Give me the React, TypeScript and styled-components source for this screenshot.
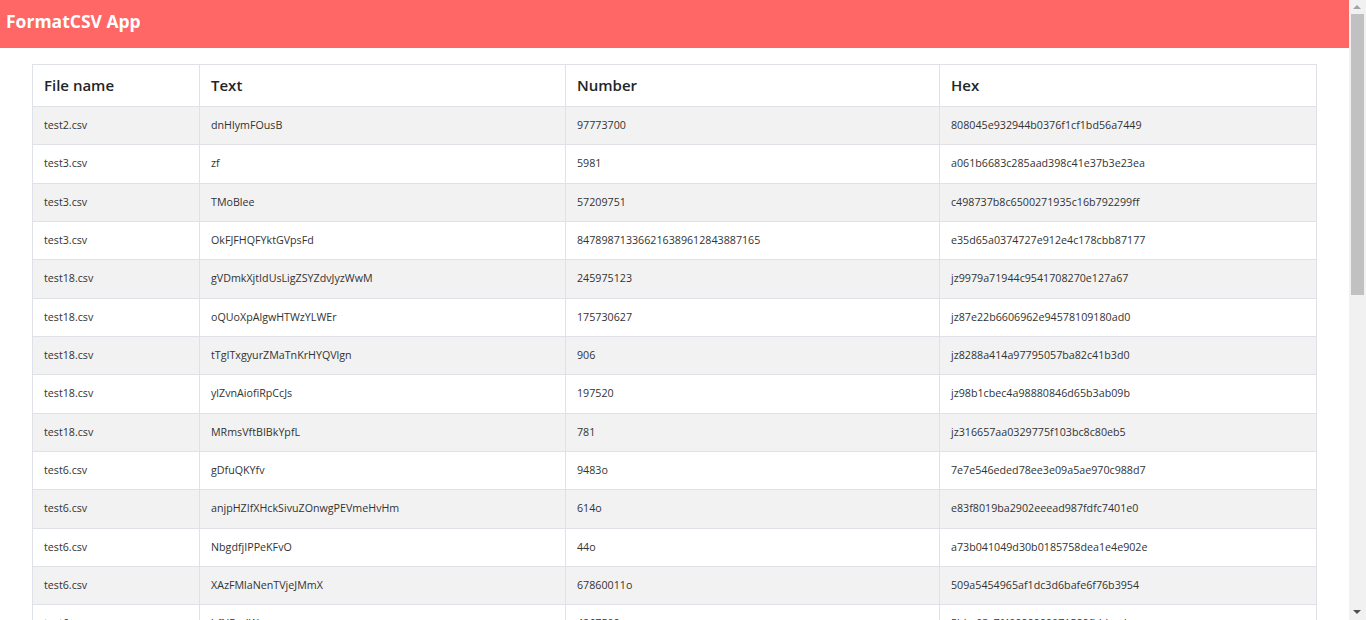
import React from 'react';
import styled, { createGlobalStyle } from 'styled-components';

const GlobalStyle = createGlobalStyle`
  html, body {
    margin: 0;
    padding: 0;
    background: #ffffff;
    font-family: "Open Sans", "Noto Sans", sans-serif;
    color: #212529;
  }
`;

const Page = styled.div`
  padding-right: 17px;
`;

const Header = styled.header`
  display: flex;
  align-items: center;
  height: 48px;
  padding: 0 6px 6px;
  box-sizing: border-box;
  background-color: #ff6666;
`;

const Title = styled.h1`
  margin: 0;
  font-size: 17.5px;
  font-weight: 700;
  color: #ffffff;
`;

const Main = styled.main`
  padding: 16px 33px 32px 32px;
`;

const Table = styled.table`
  width: 100%;
  border-collapse: collapse;
  table-layout: fixed;
  border: 1px solid #dee2e6;
`;

const Col = styled.col<{ $width: number }>`
  width: ${(p) => p.$width}px;
`;

const HeadCell = styled.th`
  padding: 9px 11px;
  text-align: left;
  font-size: 15px;
  font-weight: 600;
  line-height: 23px;
  color: #212529;
  border: 1px solid #dee2e6;
`;

const Row = styled.tr<{ $striped: boolean }>`
  background-color: ${(p) => (p.$striped ? '#f2f2f2' : '#ffffff')};
`;

const Cell = styled.td`
  padding: 12px 11px;
  font-size: 10.7px;
  line-height: 13.35px;
  color: #333;
  border: 1px solid #dee2e6;
  white-space: nowrap;
  overflow: hidden;
`;

/* stand-in for the browser scrollbar seen at the right edge */
const ScrollTrack = styled.div`
  position: fixed;
  top: 0;
  right: 0;
  width: 17px;
  height: 100vh;
  background: #f1f1f1;
`;

const ScrollThumb = styled.div`
  position: absolute;
  top: 14px;
  left: 2px;
  width: 13px;
  height: 281px;
  background: #c1c1c1;
`;

const ScrollArrow = styled.div<{ $down?: boolean }>`
  position: absolute;
  left: 4px;
  ${(p) => (p.$down ? 'bottom: 6px;' : 'top: 5px;')}
  width: 0;
  height: 0;
  border-left: 4px solid transparent;
  border-right: 4px solid transparent;
  ${(p) =>
    p.$down ? 'border-top: 4px solid #505050;' : 'border-bottom: 4px solid #a3a3a3;'}
`;

type Record = [string, string, string, string];

const rows: Record[] = [
  ['test2.csv', 'dnHlymFOusB', '97773700', '808045e932944b0376f1cf1bd56a7449'],
  ['test3.csv', 'zf', '5981', 'a061b6683c285aad398c41e37b3e23ea'],
  ['test3.csv', 'TMoBlee', '57209751', 'c498737b8c6500271935c16b792299ff'],
  ['test3.csv', 'OkFJFHQFYktGVpsFd', '847898713366216389612843887165', 'e35d65a0374727e912e4c178cbb87177'],
  ['test18.csv', 'gVDmkXjtIdUsLigZSYZdvJyzWwM', '245975123', 'jz9979a71944c9541708270e127a67'],
  ['test18.csv', 'oQUoXpAlgwHTWzYLWEr', '175730627', 'jz87e22b6606962e94578109180ad0'],
  ['test18.csv', 'tTgITxgyurZMaTnKrHYQVlgn', '906', 'jz8288a414a97795057ba82c41b3d0'],
  ['test18.csv', 'ylZvnAiofiRpCcJs', '197520', 'jz98b1cbec4a98880846d65b3ab09b'],
  ['test18.csv', 'MRmsVftBIBkYpfL', '781', 'jz316657aa0329775f103bc8c80eb5'],
  ['test6.csv', 'gDfuQKYfv', '9483o', '7e7e546eded78ee3e09a5ae970c988d7'],
  ['test6.csv', 'anjpHZIfXHckSivuZOnwgPEVmeHvHm', '614o', 'e83f8019ba2902eeead987fdfc7401e0'],
  ['test6.csv', 'NbgdfjIPPeKFvO', '44o', 'a73b041049d30b0185758dea1e4e902e'],
  ['test6.csv', 'XAzFMlaNenTVjeJMmX', '67860011o', '509a5454965af1dc3d6bafe6f76b3954'],
  ['test6.csv', 'hfNEcxIWgo', '4267509', '5bbe03c7f40999999071589fbbbaeb'],
  ['test7.csv', 'QwLrbSaeNn', '3301', '2bf3a1e92c50d77a8e1c44b9f0ad61e3'],
  ['test7.csv', 'jKxUYpMmTqaZ', '8890412', '91d0ce55a7b8c23f6e0147d9ab82f3c1'],
  ['test7.csv', 'PRvoNbHaL', '72', 'c3e7a1b09d4f5628e07a93bd14c6f25e'],
  ['test7.csv', 'sWtEkGdhZyOqfBuV', '190334', '4f8b2e6a1d9c03757e8a16b4d2c90fa3'],
  ['test8.csv', 'yHnCeXoRdP', '551020', 'jz6a4d9e2f017b853c6e9a02b4d7e1'],
  ['test8.csv', 'LmZoKsVwqT', '40091', 'jz0c8b7a6f5e4d3c2b1a09f8e7d6c5'],
  ['test8.csv', 'uBiQfTnxEaJ', '3o', 'jz5e1f2a3b4c5d6e7f8091a2b3c4d5'],
  ['test9.csv', 'GxVrWpYkLoMd', '66720981', 'b7a0e35c2d4f918e6a7c0b3d5f1e2a94'],
  ['test9.csv', 'oCsEiRtAnBh', '418', '0e9d8c7b6a5f4e3d2c1b0a9f8e7d6c5b'],
  ['test9.csv', 'ZqPuKyWmNvLj', '9001237', 'f1e2d3c4b5a6978877665544332211aa'],
  ['test10.csv', 'DkTmQrXaHe', '12o', '3c5e7a9b1d2f4e6a8c0b2d4f6e8a0c1e'],
  ['test10.csv', 'aYfNwUsPoGi', '7345', 'd4c3b2a1f0e9d8c7b6a5f4e3d2c1b0a9'],
  ['test10.csv', 'VbJcOlErSdKz', '28830117', '6a7b8c9d0e1f2a3b4c5d6e7f8a9b0c1d'],
  ['test11.csv', 'MpIuYtReWq', '5002', 'e0d1c2b3a4f5e6d7c8b9a0f1e2d3c4b5'],
  ['test11.csv', 'hGfDsAzXcVb', '919191', '8f7e6d5c4b3a29180f7e6d5c4b3a2918'],
  ['test11.csv', 'NmLkJhGqWe', '64o', 'a1b2c3d4e5f60718293a4b5c6d7e8f90'],
];

const columns = [
  { label: 'File name', width: 167 },
  { label: 'Text', width: 366 },
  { label: 'Number', width: 374 },
  { label: 'Hex', width: 377 },
];

export default function App() {
  return (
    <Page>
      <GlobalStyle />
      <Header>
        <Title>FormatCSV App</Title>
      </Header>
      <Main>
        <Table>
          <colgroup>
            {columns.map((c) => (
              <Col key={c.label} $width={c.width} />
            ))}
          </colgroup>
          <thead>
            <tr>
              {columns.map((c) => (
                <HeadCell key={c.label}>{c.label}</HeadCell>
              ))}
            </tr>
          </thead>
          <tbody>
            {rows.map((r, i) => (
              <Row key={i} $striped={i % 2 === 0}>
                {r.map((v, j) => (
                  <Cell key={j}>{v}</Cell>
                ))}
              </Row>
            ))}
          </tbody>
        </Table>
      </Main>
      <ScrollTrack>
        <ScrollArrow />
        <ScrollThumb />
        <ScrollArrow $down />
      </ScrollTrack>
    </Page>
  );
}
